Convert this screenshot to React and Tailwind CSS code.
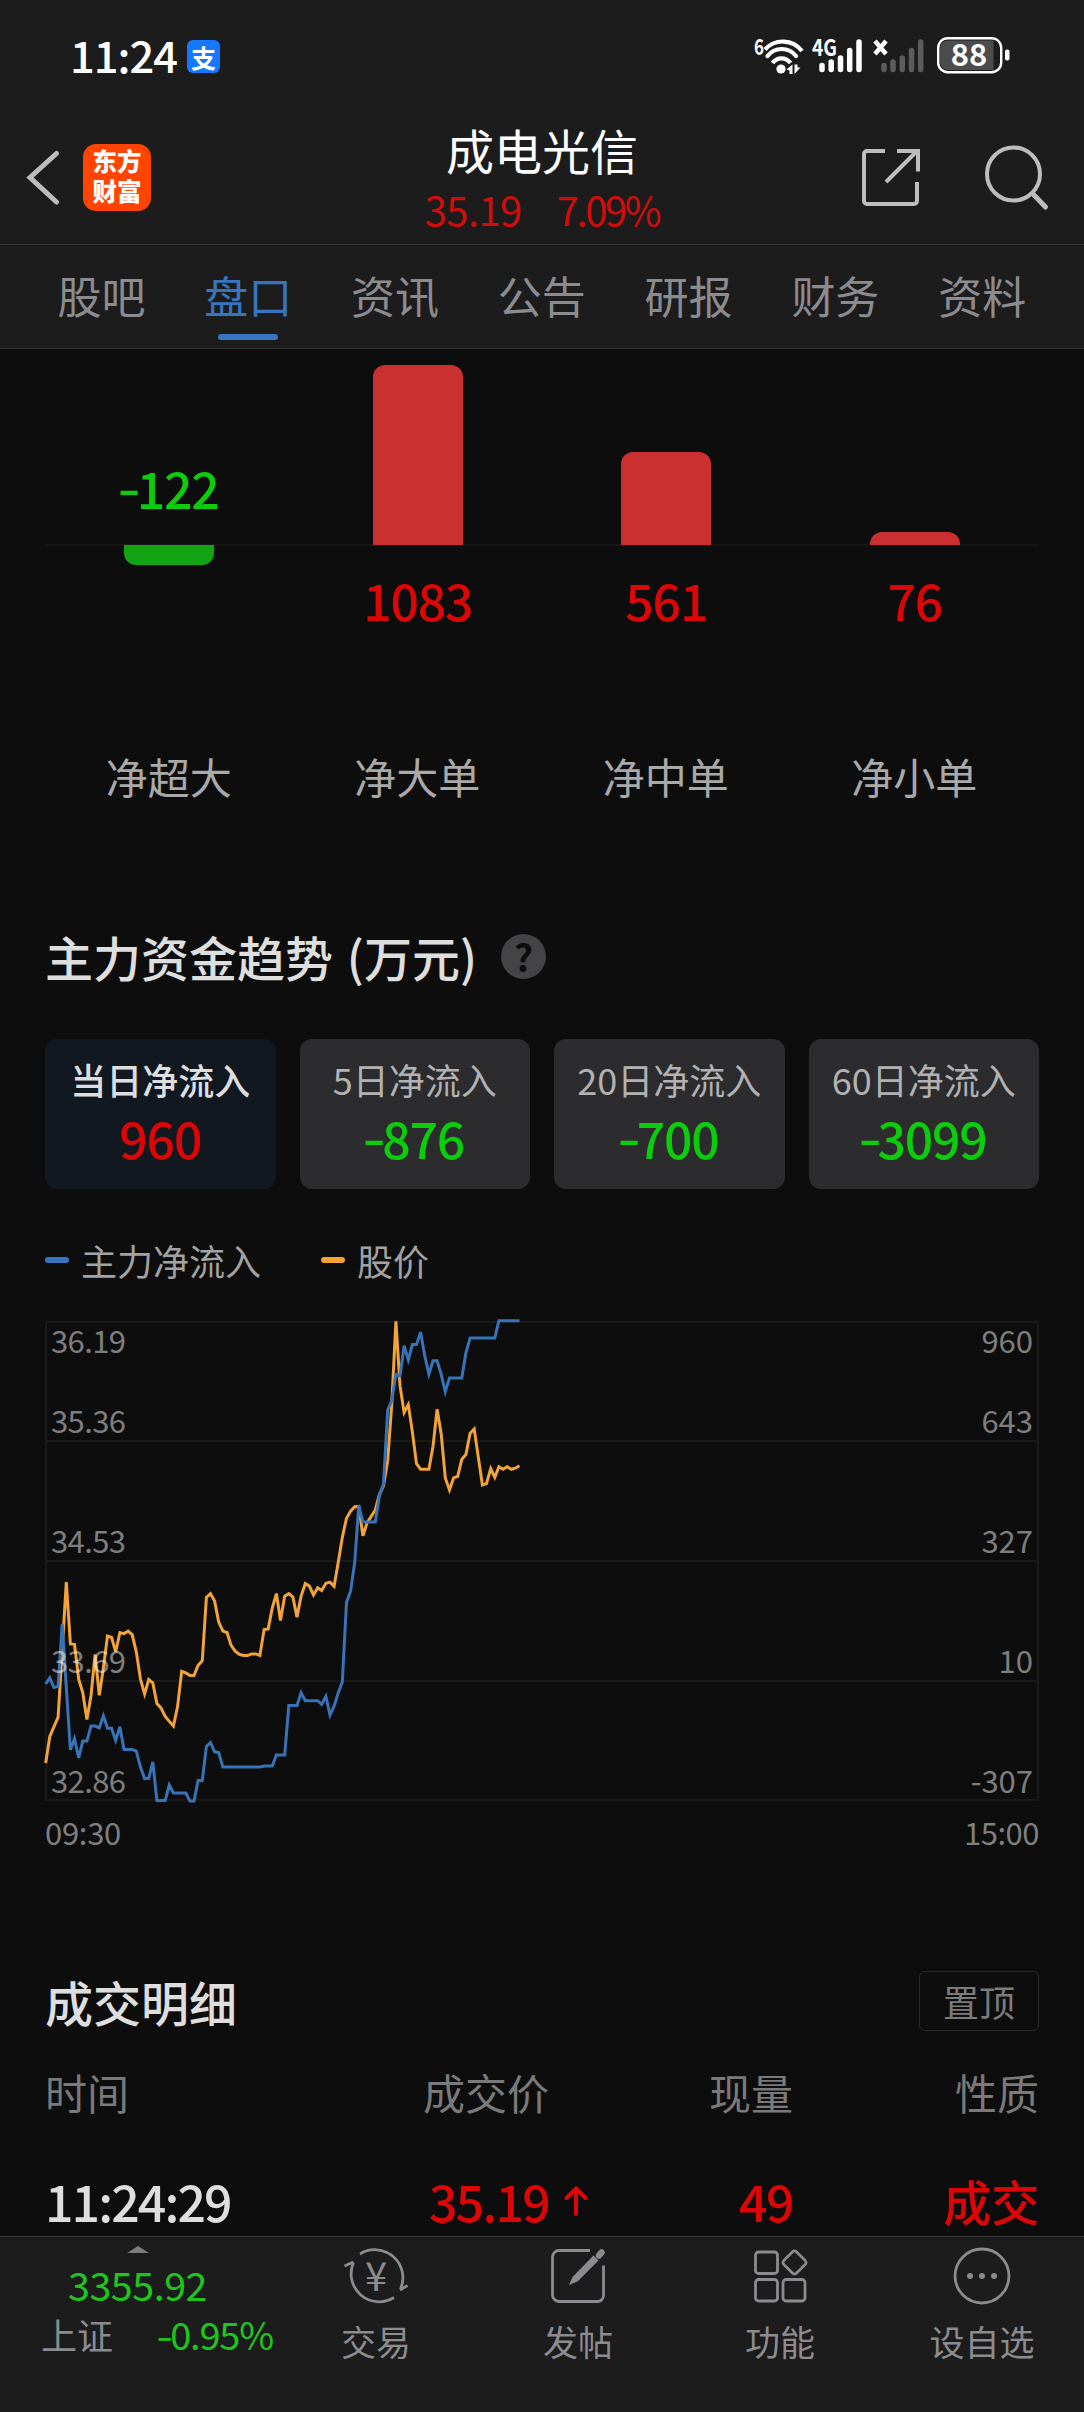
import React from 'react'

const tabs = ['股吧', '盘口', '资讯', '公告', '研报', '财务', '资料']

const orders = [
  { label: '净超大', value: -122, height: 20 },
  { label: '净大单', value: 1083, height: 180 },
  { label: '净中单', value: 561, height: 93 },
  { label: '净小单', value: 76, height: 13 },
]

const periods = [
  { label: '当日净流入', value: 960, active: true },
  { label: '5日净流入', value: -876 },
  { label: '20日净流入', value: -700 },
  { label: '60日净流入', value: -3099 },
]

const gridLines = [
  { y: 1, textY: 32, price: '36.19', flow: '960' },
  { y: 120, textY: 111.5, price: '35.36', flow: '643' },
  { y: 240, textY: 231.5, price: '34.53', flow: '327' },
  { y: 360, textY: 351.5, price: '33.69', flow: '10' },
  { y: 479, textY: 471.5, price: '32.86', flow: '-307' },
]

// one sample per minute, measured down from the top of the plot
const priceSeries = [
  1296, 1222, 1195, 1168, 980, 790, 963, 964, 1062, 1100, 1175, 1108, 992, 1107, 1030, 941, 945, 985, 931, 934,
  927, 937, 985, 1062, 1103, 1063, 1072, 1130, 1143, 1166, 1180, 1193, 1140, 1040, 1044, 1051, 1051, 1023, 1010, 833,
  822, 843, 902, 927, 931, 967, 983, 992, 995, 995, 991, 991, 995, 923, 921, 862, 822, 897, 829, 822,
  832, 888, 829, 794, 801, 826, 806, 813, 793, 790, 802, 735, 665, 611, 591, 579, 578, 660, 624, 606,
  588, 545, 520, 450, 290, 60, 240, 315, 293, 370, 458, 474, 474, 474, 410, 306, 375, 498, 532, 498,
  494, 446, 433, 373, 361, 440, 518, 514, 472, 497, 467, 474, 467, 474, 471, 464,
]

const flowSeries = [
  1075, 1058, 1085, 1082, 907, 1085, 1260, 1228, 1282, 1235, 1235, 1193, 1193, 1198, 1164, 1199, 1199, 1233, 1195, 1259,
  1259, 1259, 1263, 1308, 1340, 1340, 1293, 1401, 1401, 1401, 1358, 1380, 1380, 1380, 1380, 1403, 1403, 1345, 1345, 1250,
  1239, 1265, 1267, 1308, 1308, 1308, 1308, 1308, 1308, 1308, 1308, 1308, 1308, 1305, 1305, 1305, 1274, 1274, 1274, 1135,
  1135, 1135, 1100, 1122, 1122, 1122, 1122, 1132, 1110, 1162, 1137, 1100, 1070, 847, 815, 735, 575, 622, 622, 622,
  622, 548, 515, 308, 282, 208, 213, 128, 168, 125, 125, 90, 155, 208, 170, 170, 208, 257, 218, 218,
  218, 218, 148, 106, 106, 106, 106, 106, 106, 106, 58, 58, 58, 58, 58, 58,
]

const toPoints = (series) =>
  series.map((v, i) => `${(0.7 + i * 4.12).toFixed(1)},${(v / 2.8 - 21).toFixed(1)}`).join(' ')

// signed amount, the minus is drawn wider than the font's hyphen
function Amount({ value, className = '' }) {
  const negative = value < 0
  return (
    <span
      className={`text-[50px] leading-[60px] font-medium tracking-[-1.200px] ${negative ? 'text-[#0ccd0c]' : 'text-[#dc0606]'} ${className}`}
    >
      {negative && <span className="relative -top-[2px] inline-block scale-x-130">-</span>}
      {Math.abs(value)}
    </span>
  )
}

function StatusBar() {
  return (
    <div className="flex h-[112px] items-start justify-between pl-[70px] pr-[72px] pt-[37px]">
      <div className="flex items-start">
        <span className="-mt-[2px] w-[117px] text-[43.500px] leading-[40px] font-medium text-white tracking-[-1px]">11:24</span>
        <span className="mt-[3px] flex h-[33px] w-[33px] items-center justify-center rounded-[6px] bg-[#1677ff] text-[25px] leading-[30px] font-bold text-white">
          支
        </span>
      </div>
      <svg width="258" height="38" viewBox="0 0 258 38" className="-mt-px overflow-visible">
        <text x="0" y="19" fill="#fff" fontSize="22" fontWeight="700" textLength="10" lengthAdjust="spacingAndGlyphs">6</text>
        <g fill="none" stroke="#fff" strokeWidth="4.200">
          <path d="M11 13.500 A24 24 0 0 1 48 15" />
          <path d="M13.500 20 A18 18 0 0 1 42 20" strokeLinecap="round" />
          <path d="M18.500 27 A11 11 0 0 1 36.500 27" />
        </g>
        <circle cx="27" cy="33" r="4.600" fill="#fff" />
        <path d="M32.500 33.500 L38.500 28.500 V38 H35.500 V34.500z M40.500 28.500 h3 v3 h3 L40.500 38z" fill="#fff" />
        <text x="58" y="20" fill="#fff" fontSize="23" fontWeight="700" textLength="25" lengthAdjust="spacingAndGlyphs">4G</text>
        <g stroke="#fff" strokeWidth="5.500" strokeLinecap="round">
          <path d="M68 29.500 V33.500 M77.200 26 V33.500 M86.500 22 V33.500 M95.700 14.500 V33.500 M105 6 V33.500" />
        </g>
        <path d="M121 5 L132 18 M132 5 L121 18" stroke="#fff" strokeWidth="4.500" />
        <g stroke="#5c5c5c" strokeWidth="5.500" strokeLinecap="round">
          <path d="M130 29.500 V33.500 M139 26 V33.500 M148.300 22 V33.500 M157.500 14.500 V33.500 M166.700 6 V33.500" />
        </g>
        <rect x="184.200" y="2.200" width="63" height="34" rx="9.500" fill="none" stroke="#fff" strokeWidth="2.400" />
        <path d="M194 4.500 H239.500 V34 H194 a8 8 0 0 1 -8 -8 V12.500 a8 8 0 0 1 8 -8z" fill="#4c4c4c" />
        <text x="215" y="30" fill="#fff" fontSize="31" fontWeight="700" textAnchor="middle">88</text>
        <rect x="251" y="13.500" width="4.500" height="11" rx="2" fill="#fff" />
      </svg>
    </div>
  )
}

function Header() {
  return (
    <div className="flex h-[133px] items-start border-b border-[#343434]">
      <div className="flex w-[362px] pt-[31px]">
        <svg width="83" height="70" viewBox="0 0 83 70" fill="none" stroke="#bdbdbd" strokeWidth="5" strokeLinecap="round">
          <path d="M56.500 10.500 L30 34.500 L56.500 59" />
        </svg>
        <div className="mt-[1px] h-[67px] w-[68px] rounded-[13px] bg-[#ff4400] pt-[2px] text-center text-[24.500px] leading-[30px] font-black text-white">
          东方
          <br />
          财富
        </div>
      </div>
      <div className="flex w-[360px] flex-col items-center pt-[9px]">
        <h1 className="text-[48px] leading-[56px] text-white">成电光信</h1>
        <div className="mt-[2px] flex gap-[35px] text-[40px] leading-[60px] text-[#d10c0c]">
          <span className="tracking-[-0.600px]">35.19</span>
          <span className="tracking-[-2.400px]">7.09%</span>
        </div>
      </div>
      <svg width="200" height="70" viewBox="0 0 200 70" className="ml-[128px] mt-[30px]" fill="none" stroke="#bdbdbd" strokeWidth="4">
        <path d="M35 9 H17 a3 3 0 0 0 -3 3 V59 a3 3 0 0 0 3 3 H64 a3 3 0 0 0 3 -3 V40" />
        <path d="M47 9 H68 V29.500 M67 9 L36 40" />
        <circle cx="163.500" cy="32" r="26.500" />
        <path d="M183 52 L195.500 65" strokeWidth="5" strokeLinecap="round" />
      </svg>
    </div>
  )
}

function Tabs() {
  return (
    <div className="flex h-[104px] border-b border-[#303030] pl-[28px]">
      {tabs.map((tab) => (
        <div key={tab} className="flex w-[146.800px] flex-col items-center pt-[20px]">
          <span className={`text-[44px] leading-[60px] ${tab === '盘口' ? 'text-[#3776bf]' : 'text-[#8c8c90]'}`}>{tab}</span>
          {tab === '盘口' && <span className="mt-[9px] h-[6px] w-[60px] rounded-full bg-[#3776bf]" />}
        </div>
      ))}
    </div>
  )
}

function OrderBars() {
  return (
    <div className="mx-[45px] grid grid-cols-4">
      {orders.map(({ label, value, height }) => (
        <div key={label} className="flex flex-col items-center">
          <div className="flex h-[197px] w-full flex-col items-center justify-end border-b-2 border-[#171717]">
            {value < 0 ? (
              <Amount value={value} className="mb-[27px]" />
            ) : (
              <div className="-mb-px w-[90px] rounded-t-[12px] bg-[#cb3031]" style={{ height }} />
            )}
          </div>
          <div className="flex h-[200px] flex-col items-center">
            {value < 0 ? (
              <div className="-mt-px w-[90px] rounded-b-[12px] bg-[#13a413]" style={{ height }} />
            ) : (
              <Amount value={value} className="mt-[23px]" />
            )}
          </div>
          <span className="-ml-[1px] text-[42px] leading-[60px] text-[#a9a9a9]">{label}</span>
        </div>
      ))}
    </div>
  )
}

function TrendSection() {
  return (
    <section className="mx-[45px] mt-[115px]">
      <div className="flex items-center">
        <h2 className="text-[48px] leading-[70px] font-medium text-[#dedede]">
          主力资金趋势 <span className="ml-[3px]">(万元)</span>
        </h2>
        <span className="ml-[24px] flex h-[45px] w-[45px] items-center justify-center rounded-full bg-[#444446] text-[37px] leading-[40px] font-bold text-[#0d0d0d]">
          ?
        </span>
      </div>
      <div className="mt-[48px] grid grid-cols-4 gap-[24px]">
        {periods.map(({ label, value, active }) => (
          <div
            key={label}
            className={`flex h-[150px] flex-col items-center rounded-[12px] pt-[15px] ${active ? 'bg-[#111820]' : 'bg-[#2c2c2e]'}`}
          >
            <span className={`text-[36px] leading-[50px] ${active ? 'font-medium text-[#dcdee0]' : 'text-[#b2b2b2]'}`}>{label}</span>
            <Amount value={value} className="mt-[3px]" />
          </div>
        ))}
      </div>
      <div className="mt-[46px] flex h-[50px] items-center text-[36px] leading-[50px] text-[#a2a2a2]">
        <span className="h-[6px] w-[24px] rounded-full bg-[#3776bf]" />
        <span className="ml-[12px]">主力净流入</span>
        <span className="ml-[60px] h-[6px] w-[24px] rounded-full bg-[#f5a430]" />
        <span className="ml-[12px]">股价</span>
      </div>
      <TrendChart />
      <div className="mt-[6px] flex justify-between text-[31px] leading-[50px] text-[#7f7f7f]">
        <span className="tracking-[-0.300px]">09:30</span>
        <span className="tracking-[-0.500px]">15:00</span>
      </div>
    </section>
  )
}

function TrendChart() {
  return (
    <svg width="994" height="480" viewBox="0 0 994 480" className="mt-[36px] overflow-visible">
      <g fill="none" stroke="#191919" strokeWidth="2">
        <path d="M1 0 V480 M993 0 V480" />
        {gridLines.map(({ y }) => (
          <path key={y} d={`M0 ${y} H994`} />
        ))}
      </g>
      <polyline points={toPoints(priceSeries)} fill="none" stroke="#f2a33a" strokeWidth="3" />
      <polyline points={toPoints(flowSeries)} fill="none" stroke="#3873b8" strokeWidth="3" />
      <g fill="#fff" fillOpacity="0.47" fontSize="31">
        {gridLines.map(({ textY, price, flow }) => (
          <React.Fragment key={price}>
            <text x="6" y={textY} textLength="75">{price}</text>
            <text x="988" y={textY} textAnchor="end">{flow}</text>
          </React.Fragment>
        ))}
      </g>
    </svg>
  )
}

function TradeDetails() {
  return (
    <section className="mx-[45px] mt-[114px]">
      <div className="flex items-center justify-between">
        <h2 className="text-[48px] leading-[60px] font-medium text-[#dedede]">成交明细</h2>
        <button className="h-[60px] w-[120px] rounded-[6px] border border-[#2a2a2a] text-[36px] leading-[54px] text-[#7c7c7c]">置顶</button>
      </div>
      <div className="mt-[31px] grid grid-cols-[504px_244px_246px] text-[42px] leading-[60px] text-[#7a7a7a]">
        <div className="flex justify-between">
          <span>时间</span>
          <span>成交价</span>
        </div>
        <span className="text-right">现量</span>
        <span className="text-right">性质</span>
      </div>
      <div className="mt-[48px] grid grid-cols-[504px_244px_246px] text-[50px] leading-[60px] font-medium text-[#dc0606]">
        <div className="flex justify-between">
          <span className="tracking-[-1.900px] text-[#dedede]">11:24:29</span>
          <span className="relative">
            <span className="tracking-[-1.800px]">35.19</span>
            <svg width="26" height="32" viewBox="0 0 26 32" className="absolute -right-[40px] top-[15px]" fill="none" stroke="#dc0606" strokeWidth="4" strokeLinecap="round">
              <path d="M13 29 V4 M3.500 13 L13 3.500 L22.500 13" />
            </svg>
          </span>
        </div>
        <span className="text-right tracking-[-1.500px]">49</span>
        <span className="text-right text-[48px]">成交</span>
      </div>
    </section>
  )
}

const actions = [
  {
    label: '交易',
    icon: (
      <>
        <path d="M14 8 A28 28 0 0 1 54.500 43 M54 44 L61.500 39.500" />
        <path d="M48 51.500 A28 28 0 0 1 7.500 16.500 M7.500 16 L-1.500 20" />
        <text x="30" y="45" fill="#8c8c90" stroke="none" fontSize="40" textAnchor="middle">¥</text>
      </>
    ),
  },
  {
    label: '发帖',
    icon: (
      <>
        <path d="M42 4.500 H11 a6.500 6.500 0 0 0 -6.500 6.500 V49 a6.500 6.500 0 0 0 6.500 6.500 H49.500 a6 6 0 0 0 6 -6 V19.500" />
        <path d="M21 39 L24.500 31 L45.500 9.500 L50.500 14.500 L29.500 35.500 Z" fill="#8c8c90" stroke="none" />
        <path d="M51 9.500 L53.500 6.500" strokeWidth="6.500" strokeLinecap="round" />
      </>
    ),
  },
  {
    label: '功能',
    icon: (
      <>
        <rect x="5.500" y="6" width="22" height="21.500" rx="3" />
        <rect x="5.500" y="33.500" width="22" height="21.500" rx="3" />
        <rect x="33" y="33.500" width="22" height="21.500" rx="3" />
        <rect x="35.500" y="7.500" width="18" height="18" rx="3" transform="rotate(45 44.500 16.500)" />
      </>
    ),
  },
  {
    label: '设自选',
    icon: (
      <>
        <circle cx="30" cy="30" r="27" />
        <g fill="#8c8c90" stroke="none">
          <circle cx="18" cy="30" r="3" />
          <circle cx="30" cy="30" r="3" />
          <circle cx="42" cy="30" r="3" />
        </g>
      </>
    ),
  },
]

function BottomBar() {
  return (
    <footer className="flex h-[176px] shrink-0 border-t border-[#363636] bg-[#1c1c1c]">
      <div className="flex w-[275px] flex-col items-center pt-[9px]">
        <svg width="22" height="7" viewBox="0 0 22 7" fill="#7d7d80">
          <path d="M0 7 L11 0 L22 7z" />
        </svg>
        <span className="mt-[8px] text-[39.500px] leading-[46px] tracking-[-0.500px] text-[#1fc51f]">3355.92</span>
        <div className="mt-[2px] flex w-full items-center justify-between pl-[41px] pr-[2px] leading-[50px]">
          <span className="text-[36px] text-[#8c8c90]">上证</span>
          <span className="text-[38px] tracking-[-1.200px] text-[#1fc51f]">
            <span className="inline-block scale-x-125">-</span>0.95%
          </span>
        </div>
      </div>
      {actions.map(({ label, icon }) => (
        <div key={label} className="flex w-[202px] flex-col items-center pt-[9px]">
          <svg width="60" height="60" viewBox="0 0 60 60" className="overflow-visible" fill="none" stroke="#8c8c90" strokeWidth="2.800">
            {icon}
          </svg>
          <span className="mt-[10px] text-[35px] leading-[50px] text-[#8c8c90]">{label}</span>
        </div>
      ))}
    </footer>
  )
}

export default function App() {
  return (
    <div className="flex h-[2412px] w-[1084px] flex-col overflow-hidden bg-[#0d0d0d] font-['Noto_Sans_CJK_SC',sans-serif]">
      <header className="shrink-0 bg-[#1c1c1c]">
        <StatusBar />
        <Header />
        <Tabs />
      </header>
      <main className="h-[1887px] shrink-0 overflow-hidden">
        <OrderBars />
        <TrendSection />
        <TradeDetails />
      </main>
      <BottomBar />
    </div>
  )
}
